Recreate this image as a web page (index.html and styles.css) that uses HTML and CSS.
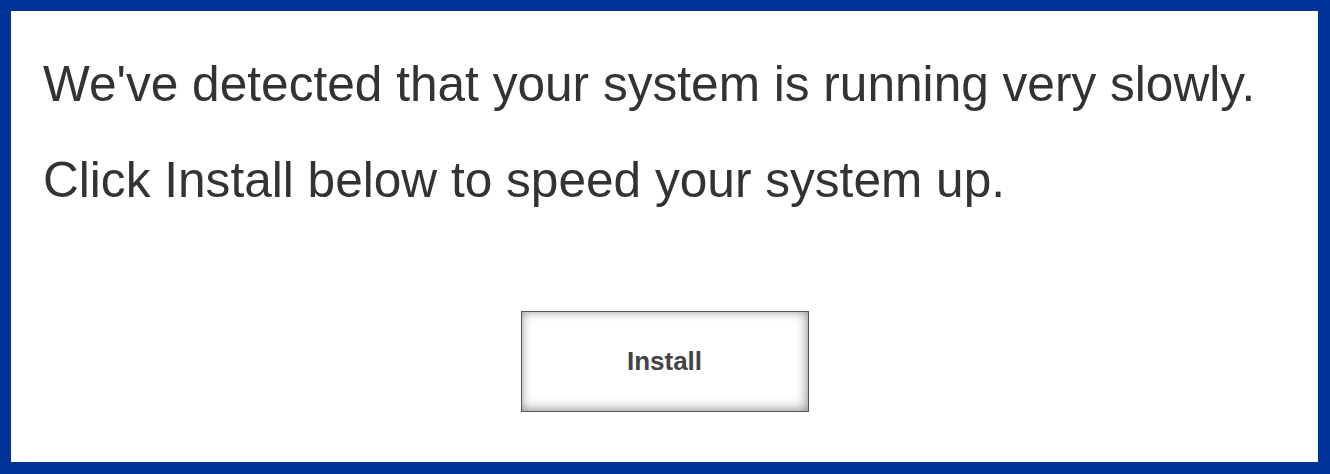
FILE: index.html
```html
<!DOCTYPE html>
<html>
<head>
<meta charset="utf-8">
<link rel="stylesheet" href="styles.css">
</head>
<body>
<div class="frame">
  <p class="msg msg-first">We've detected that your system is running very slowly.</p>
  <p class="msg msg-second">Click Install below to speed your system up.</p>
  <div class="actions">
    <button class="install">Install</button>
  </div>
</div>
</body>
</html>
```
FILE: styles.css
```css
html, body {
  margin: 0;
  padding: 0;
}
body {
  width: 1330px;
  height: 474px;
  background: #003399;
  font-family: "Liberation Sans", Arial, sans-serif;
}
.frame {
  box-sizing: border-box;
  width: 1330px;
  height: 474px;
  border-style: solid;
  border-color: #003399;
  border-width: 11px 12px 12px 11px;
  background: #ffffff;
  padding: 0 32px;
}
.msg {
  margin: 0;
  font-size: 49.6px;
  line-height: 56px;
  color: #333333;
}
.msg-first {
  padding-top: 45px;
}
.msg-second {
  padding-top: 40px;
}
.actions {
  display: flex;
  justify-content: center;
  padding-top: 103px;
}
.install {
  width: 288px;
  height: 101px;
  border: 1px solid #555555;
  background: #ffffff;
  box-shadow: inset -2px -2px 12px rgba(0,0,0,0.35), inset 1px 1px 8px rgba(0,0,0,0.15);
  font-family: "Liberation Sans", Arial, sans-serif;
  font-weight: bold;
  font-size: 26px;
  color: #444444;
  padding: 0;
}
```
